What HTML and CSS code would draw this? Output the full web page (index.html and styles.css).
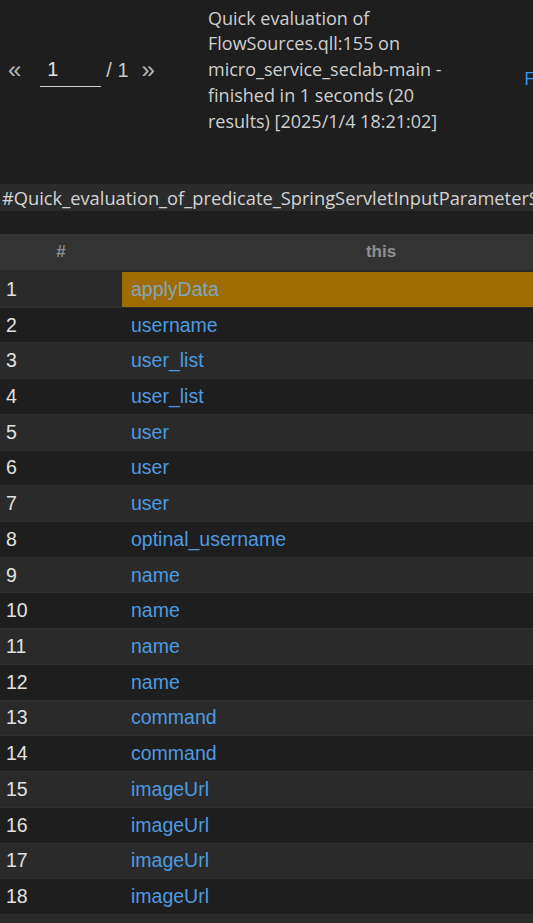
FILE: index.html
```html
<!DOCTYPE html>
<html lang="en">
<head>
<meta charset="utf-8">
<title>Query results</title>
<link rel="stylesheet" href="styles.css">
</head>
<body>
<div class="toolbar">
  <div class="pager">
    <span class="arrow">«</span>
    <span class="page-input">1</span>
    <span class="total">/ 1</span>
    <span class="arrow">»</span>
  </div>
  <div class="status">Quick evaluation of<br>FlowSources.qll:155 on<br>micro_service_seclab-main -<br>finished in 1 seconds (20<br>results) [2025/1/4 18:21:02]</div>
  <a class="open-link">Filter</a>
</div>
<div class="title-strip">#Quick_evaluation_of_predicate_SpringServletInputParameterSource</div>
<table class="results">
  <thead>
    <tr><th class="col-num">#</th><th class="col-this">this</th></tr>
  </thead>
  <tbody>
    <tr><td class="num">1</td><td class="val selected">applyData</td></tr>
    <tr><td class="num">2</td><td class="val">username</td></tr>
    <tr><td class="num">3</td><td class="val">user_list</td></tr>
    <tr><td class="num">4</td><td class="val">user_list</td></tr>
    <tr><td class="num">5</td><td class="val">user</td></tr>
    <tr><td class="num">6</td><td class="val">user</td></tr>
    <tr><td class="num">7</td><td class="val">user</td></tr>
    <tr><td class="num">8</td><td class="val">optinal_username</td></tr>
    <tr><td class="num">9</td><td class="val">name</td></tr>
    <tr><td class="num">10</td><td class="val">name</td></tr>
    <tr><td class="num">11</td><td class="val">name</td></tr>
    <tr><td class="num">12</td><td class="val">name</td></tr>
    <tr><td class="num">13</td><td class="val">command</td></tr>
    <tr><td class="num">14</td><td class="val">command</td></tr>
    <tr><td class="num">15</td><td class="val">imageUrl</td></tr>
    <tr><td class="num">16</td><td class="val">imageUrl</td></tr>
    <tr><td class="num">17</td><td class="val">imageUrl</td></tr>
    <tr><td class="num">18</td><td class="val">imageUrl</td></tr>
    <tr><td class="num">19</td><td class="val">url</td></tr>
    <tr><td class="num">20</td><td class="val">url</td></tr>
  </tbody>
</table>
</body>
</html>
```
FILE: styles.css
```css
html, body {
  margin: 0;
  padding: 0;
  background: #1e1e1e;
  overflow: hidden;
}
body {
  width: 533px;
  height: 923px;
  font-family: "Open Sans", "Noto Sans", sans-serif;
  color: #cccccc;
}
.toolbar {
  display: flex;
  align-items: center;
  height: 140px;
  white-space: nowrap;
}
.pager {
  display: flex;
  align-items: center;
  width: 208px;
  flex: none;
  font-family: "Liberation Sans", Arial, sans-serif;
  font-size: 20px;
  color: #c8c8c8;
}
.arrow {
  font-size: 24px;
  color: #b8b8b8;
  margin-left: 8px;
}
.page-input {
  display: inline-block;
  width: 54px;
  margin-left: 19px;
  margin-top: 4px;
  padding: 0 0 5px 7px;
  border-bottom: 1px solid #d0d0d0;
  color: #e0e0e0;
}
.total {
  margin-left: 5px;
  margin-right: 5px;
}
.status {
  flex: none;
  width: 300px;
  font-size: 18px;
  line-height: 25.8px;
  color: #cfcfcf;
}
.open-link {
  margin-left: 16px;
  margin-top: 16px;
  font-size: 19px;
  color: #3794ff;
}
.title-strip {
  margin-top: 44px;
  height: 27px;
  line-height: 27px;
  background: #2b2b2b;
  white-space: nowrap;
  overflow: hidden;
  font-size: 18.3px;
  color: #d4d4d4;
  padding-left: 2px;
}
.results {
  margin-top: 23px;
  border-collapse: collapse;
  width: 640px;
  font-family: "Liberation Sans", Arial, sans-serif;
}
.results th {
  height: 36px;
  background: #333333;
  border-bottom: 2px solid #2a2a2a;
  color: #8e8e8e;
  font-size: 17px;
  font-weight: bold;
  text-align: center;
  padding: 0;
}
.col-num {
  width: 122px;
}
.results td {
  height: 34.72px;
  padding: 0;
  font-size: 19.5px;
  border-bottom: 1px solid #2f2f2f;
}
.results tbody tr:nth-child(odd) {
  background: #2a2a2a;
}
.results tbody tr:nth-child(even) {
  background: #1e1e1e;
}
.num {
  padding-left: 6px !important;
  color: #e2e2e2;
}
.val {
  padding-left: 9px !important;
  color: #4e9ae0;
}
.val.selected {
  background: #9e6c00;
  color: #7fa7c2;
}
```
